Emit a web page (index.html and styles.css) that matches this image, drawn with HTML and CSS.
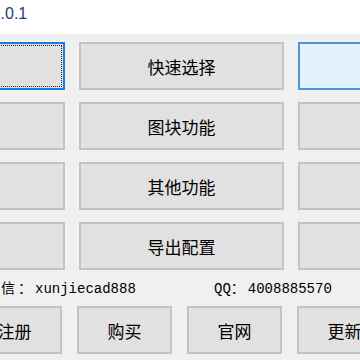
FILE: index.html
```html
<!DOCTYPE html>
<html lang="zh-CN">
<head>
<meta charset="utf-8">
<title>工具</title>
<link rel="stylesheet" href="styles.css">
</head>
<body>
<div class="header"><span class="version">V1.0.1</span></div>
<div class="panel">
  <div class="grid">
    <button class="btn focused"><span class="focus-rect"></span></button>
    <button class="btn">快速选择</button>
    <button class="btn hover"></button>
    <button class="btn"></button>
    <button class="btn">图块功能</button>
    <button class="btn"></button>
    <button class="btn"></button>
    <button class="btn">其他功能</button>
    <button class="btn"></button>
    <button class="btn"></button>
    <button class="btn">导出配置</button>
    <button class="btn"></button>
  </div>
  <div class="info">
    <span class="info-item"><span class="wide">微信：</span>xunjiecad888</span>
    <span class="info-item">QQ<span class="wide">：</span>4008885570</span>
  </div>
  <div class="actions">
    <button class="btn small">注册</button>
    <button class="btn small">购买</button>
    <button class="btn small">官网</button>
    <button class="btn small">更新</button>
  </div>
</div>
</body>
</html>
```
FILE: styles.css
```css
html, body {
  margin: 0;
  padding: 0;
  background: #f0f0f0;
  overflow: hidden;
  width: 360px;
  height: 360px;
}
.header {
  height: 34px;
  background: #ffffff;
  padding-top: 4px;
  box-sizing: border-box;
  white-space: nowrap;
  overflow: hidden;
}
.version {
  display: inline-block;
  margin-left: -19px;
  font-family: "Liberation Sans", Arial, sans-serif;
  font-size: 16px;
  line-height: 20px;
  color: #1e3c78;
}
.panel {
  margin-left: -140px;
  width: 700px;
  padding-top: 8px;
}
.grid {
  display: grid;
  grid-template-columns: 205px 205px 205px;
  grid-auto-rows: 48px;
  column-gap: 14px;
  row-gap: 12px;
}
.btn {
  position: relative;
  margin: 0;
  padding: 0;
  background: #e1e1e1;
  border: 2px solid #c3c3c3;
  font-family: "Noto Sans CJK SC", "Noto Sans", sans-serif;
  font-size: 17px;
  color: #000;
  box-sizing: border-box;
}
.btn.focused {
  border-color: #1a7fd8;
}
.focus-rect {
  position: absolute;
  inset: 1px;
  border: 1px dotted #222;
}
.btn.hover {
  background: #e5f1fb;
  border-color: #4597de;
}
.info {
  display: grid;
  grid-template-columns: 230px auto;
  padding-left: 124px;
  padding-bottom: 3px;
  height: 36px;
  box-sizing: border-box;
  align-items: center;
  font-family: "Liberation Mono", "Noto Sans CJK TC", monospace;
  font-size: 14px;
  color: #000;
  white-space: nowrap;
}
.wide {
  font-family: "Noto Sans CJK TC", sans-serif;
  letter-spacing: 3px;
}
.actions {
  display: flex;
  gap: 15px;
  padding-left: 107px;
}
.btn.small {
  width: 95px;
  height: 48px;
  flex: none;
}
```
